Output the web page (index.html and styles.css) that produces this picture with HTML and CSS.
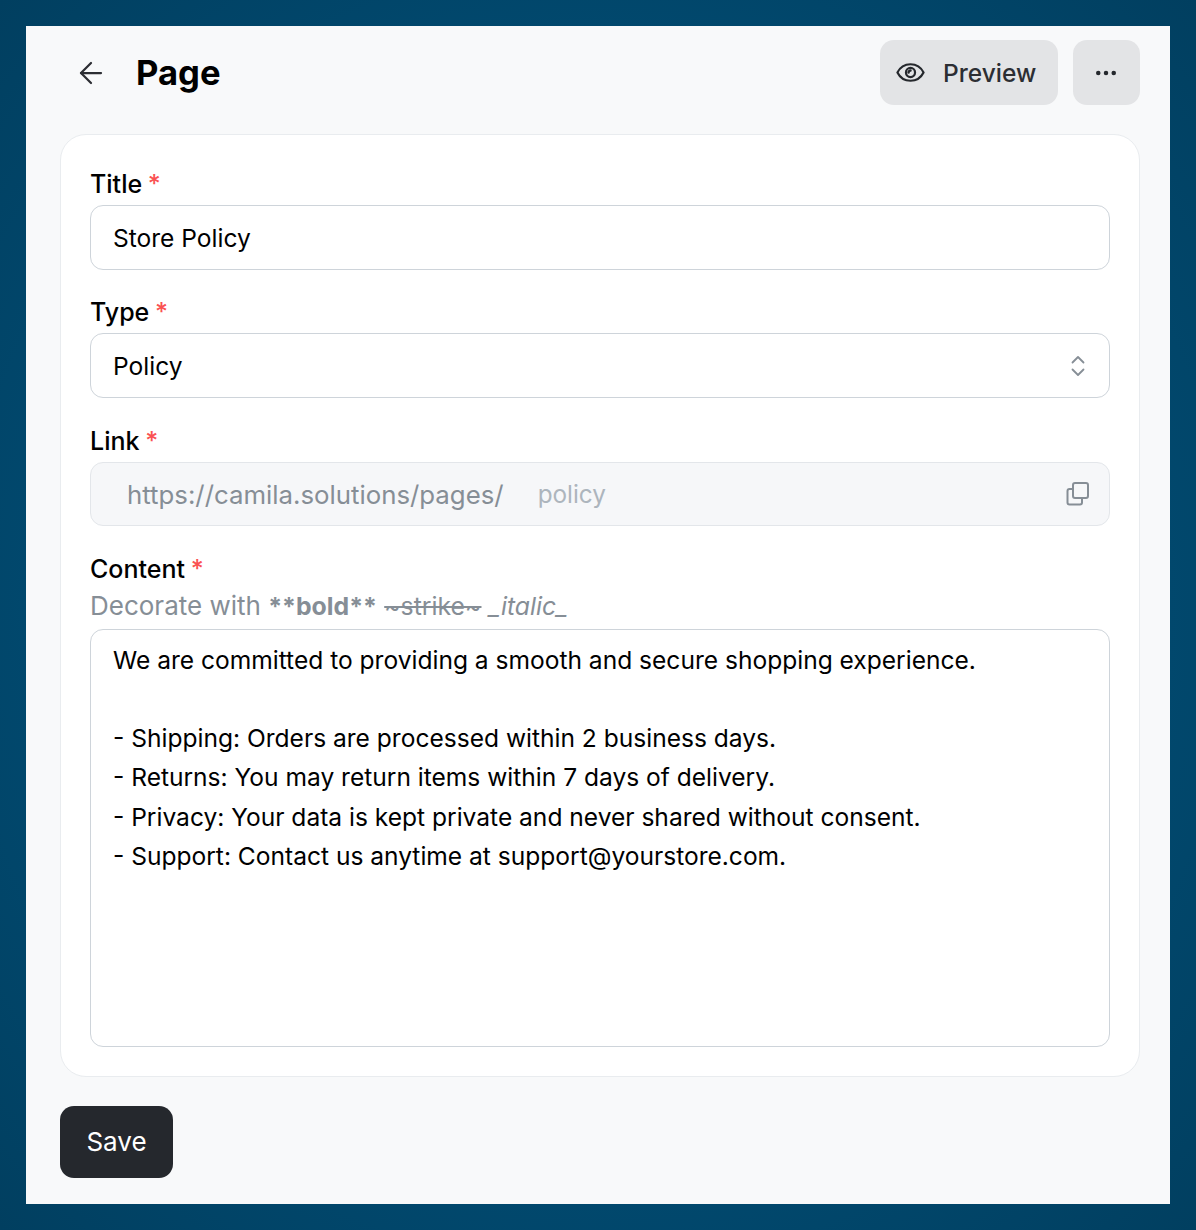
FILE: index.html
```html
<!DOCTYPE html>
<html lang="en">
<head>
  <meta charset="UTF-8">
  <meta name="viewport" content="width=device-width, initial-scale=1.0">
  <title>Page</title>
  <link rel="stylesheet" href="styles.css">
</head>
<body>
  <div class="app">
    <!-- Header -->
    <div class="header">
      <button class="back-btn" aria-label="Back">
        <svg width="30" height="30" viewBox="0 0 24 24" fill="none" stroke="#2c2e33" stroke-width="1.8" stroke-linecap="round" stroke-linejoin="round"><path d="M20 12H4"/><path d="M12 4l-8 8 8 8"/></svg>
      </button>
      <h1 class="page-title">Page</h1>
      <button class="tool-btn preview-btn">
        <svg width="33" height="33" viewBox="0 0 24 24" fill="none" stroke="#25282d" stroke-width="1.6" stroke-linecap="round" stroke-linejoin="round"><path d="M2.5 12C4.5 8 8 6 12 6s7.500 2 9.500 6c-2 4-5.500 6-9.500 6s-7.500-2-9.500-6z"/><circle cx="12" cy="12" r="3.300"/><path d="M10.600 12a1.400 1.400 0 0 1 1.400-1.400" stroke-width="1.800"/></svg>
        <span>Preview</span>
      </button>
      <button class="tool-btn more-btn" aria-label="More">
        <svg width="32" height="32" viewBox="0 0 24 24" fill="#25282d"><circle cx="6.200" cy="12" r="1.700"/><circle cx="12" cy="12" r="1.700"/><circle cx="17.800" cy="12" r="1.700"/></svg>
      </button>
    </div>

    <!-- Form -->
    <div class="card">
      <div class="field">
        <label class="label">Title <span class="req">*</span></label>
        <div class="box">Store Policy</div>
      </div>
      <div class="field">
        <label class="label">Type <span class="req">*</span></label>
        <div class="box select-box">
          <span>Policy</span>
          <svg width="22" height="26" viewBox="0 0 22 26" fill="none" stroke="#868e96" stroke-width="1.800" stroke-linecap="round" stroke-linejoin="round"><path d="M5.500 9.500L11 4l5.500 5.500"/><path d="M5.500 16.500L11 22l5.500-5.500"/></svg>
        </div>
      </div>
      <div class="field">
        <label class="label">Link <span class="req">*</span></label>
        <div class="box link-box">
          <span class="link-base">https://camila.solutions/pages/</span>
          <span class="link-slug">policy</span>
          <svg class="copy-icon" width="26" height="26" viewBox="0 0 26 26" fill="none" stroke="#868e96" stroke-width="2" stroke-linecap="round" stroke-linejoin="round"><rect x="8" y="2" width="15" height="15" rx="2"/><path d="M8 8H4.500A2 2 0 0 0 2.500 10v11.500a2 2 0 0 0 2 2H15a2 2 0 0 0 2-2V18"/></svg>
        </div>
      </div>
      <div class="field">
        <label class="label">Content <span class="req">*</span></label>
        <div class="hint">Decorate with <b>**bold**</b> <s>~strike~</s> <i>_italic_</i></div>
        <div class="box text-box">We are committed to providing a smooth and secure shopping experience.

- Shipping: Orders are processed within 2 business days.
- Returns: You may return items within 7 days of delivery.
- Privacy: Your data is kept private and never shared without consent.
- Support: Contact us anytime at support@yourstore.com.</div>
      </div>
    </div>

    <button class="save-btn">Save</button>
  </div>
</body>
</html>
```

FILE: styles.css
```css
html, body {
  height: 100%;
}
body {
  margin: 0;
  box-sizing: border-box;
  padding: 26px;
  font-family: 'Inter', sans-serif;
  font-size: 25px;
  color: #000;
  background: radial-gradient(ellipse at center, #014a70 60%, #013f60 100%);
}
button {
  font-family: inherit;
  border: none;
  cursor: pointer;
}
.app {
  height: 1178px;
  box-sizing: border-box;
  padding: 14px 30px 26px 34px;
  background: #f8f9fa;
}
.header {
  display: flex;
  align-items: center;
  height: 65px;
  margin-bottom: 29px;
}
.back-btn {
  display: flex;
  padding: 0;
  margin-left: 16px;
  background: none;
}
.page-title {
  flex: 1;
  margin: -2px 0 0 30px;
  font-size: 34.600px;
  font-weight: 700;
  color: #000;
}
.tool-btn {
  display: flex;
  align-items: center;
  justify-content: center;
  height: 65px;
  background: #e3e4e6;
  border-radius: 14px;
}
.preview-btn {
  justify-content: flex-start;
  box-sizing: border-box;
  width: 178px;
  padding-left: 14px;
  gap: 16px;
  font-size: 24.500px;
  font-weight: 500;
  color: #2c2e33;
}
.more-btn {
  width: 67px;
  margin-left: 15px;
  padding: 0 1px 0 0;
}
.card {
  box-sizing: border-box;
  height: 943px;
  padding: 29px;
  background: #fff;
  border: 1px solid #e9ecef;
  border-radius: 26px;
}
.field {
  margin-bottom: 22.800px;
}
.label {
  display: block;
  font-weight: 500;
  line-height: 41px;
}
.req {
  color: #fa5252;
  margin-left: -1px;
}
.box {
  box-sizing: border-box;
  display: flex;
  align-items: center;
  height: 64.600px;
  padding: 1px 22px 0;
  font-size: 24.550px;
  background: #fff;
  border: 1px solid #ced4da;
  border-radius: 13px;
}
.select-box {
  justify-content: space-between;
  padding-right: 20px;
}
.link-box {
  padding-top: 0;
  padding-left: 36px;
  background: #f6f7f9;
  border-color: #e3e6ea;
}
.link-base {
  font-size: 25.800px;
  color: #868e96;
}
.link-slug {
  margin-left: 34px;
  font-size: 24.300px;
  color: #adb5bd;
}
.copy-icon {
  margin-left: auto;
  margin-right: -4px;
}
.hint {
  font-size: 26px;
  color: #868e96;
  line-height: 32px;
  margin-bottom: 7px;
}
.hint b, .hint s, .hint i {
  font-size: 24.800px;
}
.text-box {
  display: block;
  height: 418px;
  padding-top: 11px;
  line-height: 39.100px;
  white-space: pre-wrap;
}
.save-btn {
  display: block;
  width: 113px;
  height: 72px;
  margin-top: 29px;
  padding: 0 0 2px;
  font-size: 26px;
  font-weight: 400;
  color: #fff;
  background: #25282d;
  border-radius: 14px;
}
```
